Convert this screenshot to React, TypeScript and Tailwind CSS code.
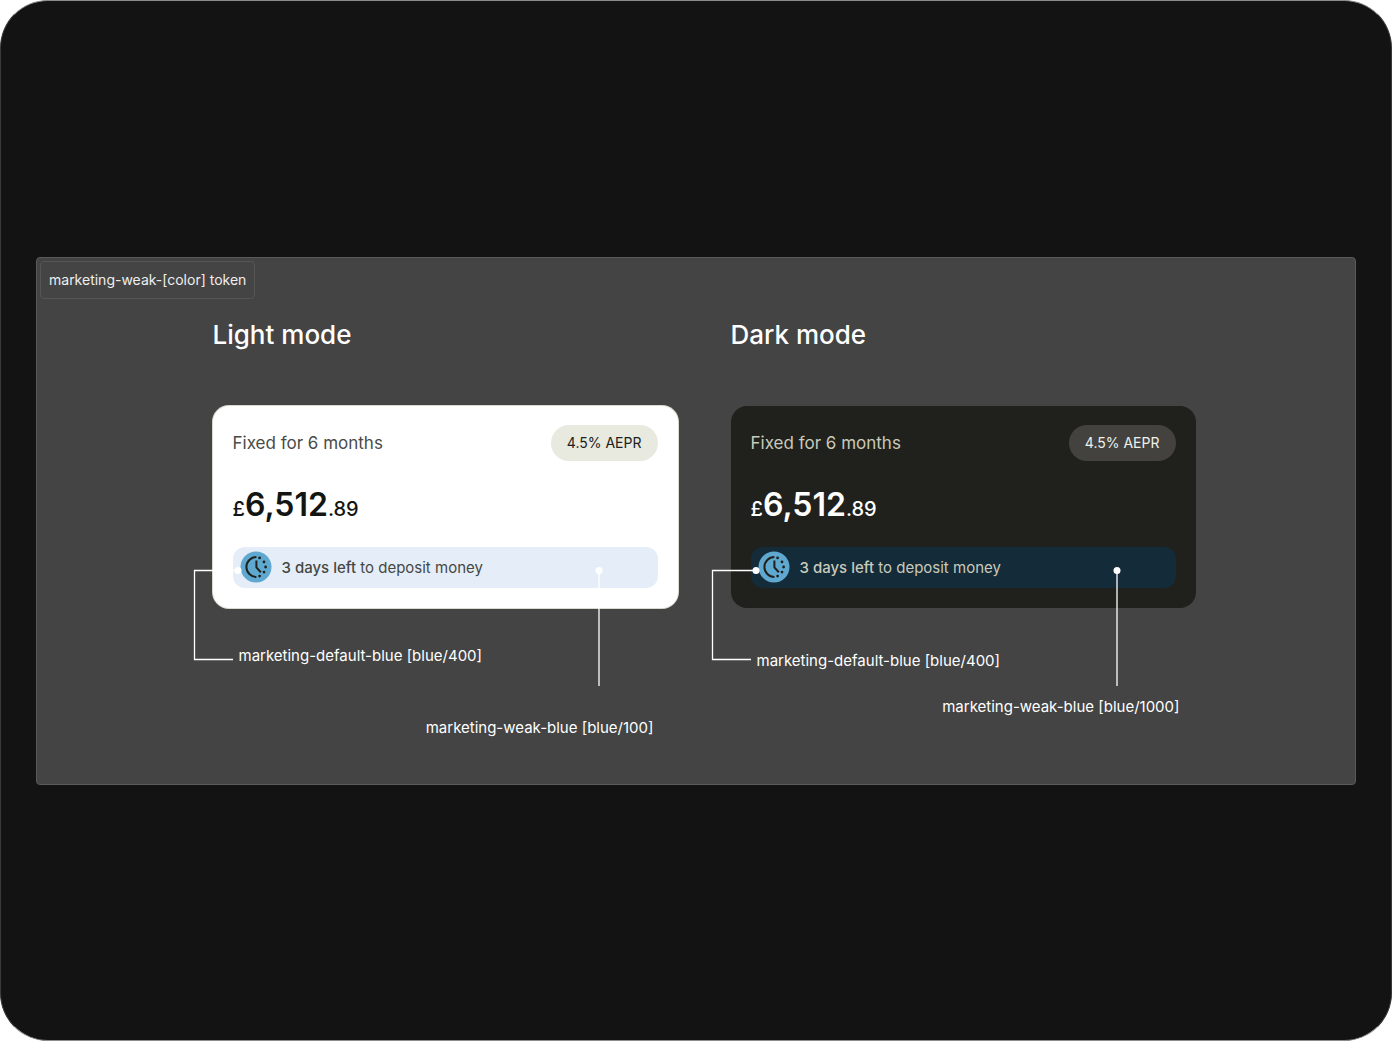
import clsx from 'clsx';

type Mode = 'light' | 'dark';

function ClockBadge() {
  return (
    <svg viewBox="0 0 32 32" className="size-8 shrink-0" aria-hidden="true">
      <circle cx="16" cy="16" r="15.5" fill="#5fa8d0" />
      <path
        d="M16.4 6A10 10 0 0 0 16.4 26M16.4 9.6v6.8l4.4 4.8"
        fill="none"
        stroke="#20211c"
        strokeWidth="2"
      />
      <g fill="#20211c">
        <circle cx="19.6" cy="6.9" r="1.4" />
        <circle cx="24" cy="10.9" r="1.4" />
        <circle cx="25.6" cy="16" r="1.4" />
        <circle cx="24" cy="21.1" r="1.4" />
        <circle cx="19.6" cy="25.1" r="1.4" />
      </g>
    </svg>
  );
}

function SavingsCard({ mode }: { mode: Mode }) {
  const dark = mode === 'dark';

  return (
    <article
      className={clsx(
        'relative rounded-2xl px-5 pt-[19px] pb-5',
        dark ? 'bg-[#20211c] text-white' : 'bg-white text-[#121511] ring-1 ring-[#d9dacf]',
      )}
    >
      <div className="flex items-center justify-between">
        <p className={clsx('text-[17px] leading-6', dark ? 'text-[#c9cabb]' : 'text-[#4a4b47]')}>
          Fixed for 6 months
        </p>
        <span
          className={clsx(
            'rounded-full px-4 py-2 text-sm leading-5',
            dark ? 'bg-[#43423e] text-[#f0f0ec]' : 'bg-[#e8e9df] text-[#20211c]',
          )}
        >
          4.5% AEPR
        </span>
      </div>

      <p className="mt-6 mb-[22px] flex items-baseline font-medium">
        <span className="text-[20px] leading-none">£</span>
        <span className="text-[32px] leading-10 font-semibold">6,512</span>
        <span className="text-[20px] leading-none">.89</span>
      </p>

      <div
        className={clsx(
          'flex items-center gap-[10px] rounded-xl px-[7px] py-1 text-[15px] leading-[33px]',
          dark ? 'bg-[#142b39] text-[#c9cabb]' : 'bg-[#e5eef8] text-[#454743]',
        )}
      >
        <ClockBadge />
        <p>
          <strong className="font-medium">3 days left</strong> to deposit money
        </p>
      </div>

      {/* Callout from the icon */}
      <svg
        viewBox="0 0 50 96"
        className="absolute top-[160px] -left-5 h-24 w-[50px]"
        fill="none"
        aria-hidden="true"
      >
        <path d="M45 4.5H1.5v89H40" stroke="#fff" strokeWidth="1.3" />
        <circle cx="45" cy="4.5" r="3.5" fill="#fff" />
      </svg>

      {/* Callout from the banner background */}
      <svg
        viewBox="0 0 8 120"
        className="absolute top-[160px] right-[75px] h-[120px] w-2"
        aria-hidden="true"
      >
        <path d="M4 4v116" stroke="#fff" strokeWidth="1.3" />
        <circle cx="4" cy="4.5" r="3.5" fill="#fff" />
      </svg>
    </article>
  );
}

export default function App() {
  return (
    <div className="min-h-screen bg-white pr-px font-['Inter',sans-serif] text-white">
      <main className="flex min-h-screen items-center rounded-[48px] border border-x-[#3a3a3a] border-y-[#8b8b8b] bg-[#131313] px-[35px]">
        <section className="w-full rounded-sm border border-[#5a5a5a] bg-[#444444] p-[3px] pb-11">
          <p className="w-fit rounded border border-[#555555] px-2 py-2 text-sm leading-5 text-[#eeeeee]">
            marketing-weak-[color] token
          </p>

          <div className="mx-auto mt-5 grid max-w-[999px] grid-cols-2 items-start gap-x-[53px] pl-4">
            <div>
              <h2 className="mb-[55px] text-[26px] font-medium leading-8">Light mode</h2>
              <SavingsCard mode="light" />
              <div className="text-[15px] leading-6">
                <p className="mt-9 pl-[26px]">marketing-default-blue [blue/400]</p>
                <p className="mt-12 pr-6 text-right">marketing-weak-blue [blue/100]</p>
              </div>
            </div>

            <div>
              <h2 className="mb-[55px] text-[26px] font-medium leading-8">Dark mode</h2>
              <SavingsCard mode="dark" />
              <div className="text-[15px] leading-6">
                <p className="mt-[41px] pl-[26px]">marketing-default-blue [blue/400]</p>
                <p className="mt-[22px] pr-4 text-right">marketing-weak-blue [blue/1000]</p>
              </div>
            </div>
          </div>
        </section>
      </main>
    </div>
  );
}
